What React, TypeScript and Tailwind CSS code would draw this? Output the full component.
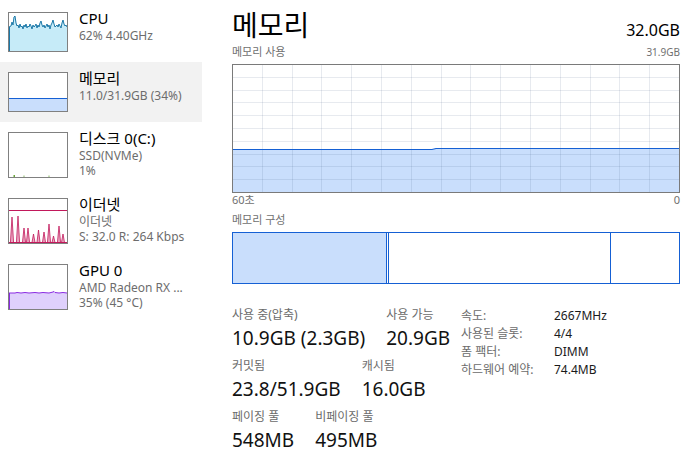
import React from 'react';

const BLUE = '#1560d4';

const CPU_PTS: [number, number][] = [
  [0, 14], [2, 13], [3, 9], [4, 12], [5, 4], [6, 3], [7, 10], [8, 13], [9, 12], [10, 15], [11, 11], [12, 14],
  [13, 13], [14, 16], [15, 12], [16, 14], [17, 11], [18, 15], [19, 13], [20, 14], [21, 11], [22, 13], [23, 16],
  [24, 12], [25, 14], [26, 13], [27, 11], [28, 15], [29, 12], [30, 14], [31, 10], [32, 8], [33, 12], [34, 14],
  [35, 12], [36, 15], [37, 13], [38, 11], [39, 14], [40, 12], [41, 16], [42, 12], [43, 10], [44, 7], [45, 11],
  [46, 14], [47, 13], [48, 12], [49, 14], [50, 11], [51, 13], [52, 15], [53, 10], [54, 7], [55, 11], [56, 13],
  [57, 12], [58, 14],
];

const ETH_SPIKES: [number, number][] = [
  [3, 18], [9, 17], [15, 29], [19, 29], [24.5, 35], [29.5, 31], [35, 33], [40, 25], [44.5, 37], [50, 27], [54, 35],
];

const GPU_PTS: [number, number][] = [
  [0, 28], [6, 28], [8, 27.5], [12, 28], [16, 27.5], [20, 28], [26, 27.5], [30, 28], [34, 27.5], [40, 28],
  [44, 27], [45, 26.5], [46, 27.5], [50, 28], [54, 27.5], [58, 28],
];

const toPts = (p: [number, number][]) => p.map(([x, y]) => `${x},${y}`).join(' ');

function CpuThumb() {
  const line = toPts(CPU_PTS);
  return (
    <svg width="58" height="38" className="block">
      <polygon points={`0,38 ${line} 58,38`} fill="#c6ebf8" />
      <polyline points={line} fill="none" stroke="#1b78a8" strokeWidth="1" />
      <line x1="0.5" y1="14" x2="0.5" y2="38" stroke="#1b78a8" />
    </svg>
  );
}

function MemThumb() {
  return (
    <svg width="58" height="38" className="block">
      <rect x="0" y="25" width="58" height="13" fill="#c9defc" />
      <line x1="0" y1="25.5" x2="58" y2="25.5" stroke={BLUE} />
    </svg>
  );
}

function DiskThumb() {
  return (
    <svg width="58" height="44" className="block">
      <rect x="4.5" y="42" width="1.5" height="2" fill="#6aa63a" />
      <rect x="14.5" y="42.5" width="1" height="1.5" fill="#8bbb66" />
      <rect x="39.5" y="42.5" width="1" height="1.5" fill="#8bbb66" />
    </svg>
  );
}

function EthThumb() {
  return (
    <svg width="58" height="44" className="block">
      <line x1="0" y1="11.5" x2="58" y2="11.5" stroke="#c2185b" />
      {ETH_SPIKES.map(([x, y], i) => (
        <polygon key={i} points={`${x - 1.6},44 ${x},${y} ${x + 1.6},44`} fill="#eaa9c3" stroke="#c2185b" strokeWidth="0.8" />
      ))}
      <line x1="0" y1="43.5" x2="58" y2="43.5" stroke="#c2185b" />
    </svg>
  );
}

function GpuThumb() {
  const line = toPts(GPU_PTS);
  return (
    <svg width="58" height="44" className="block">
      <polygon points={`0,44 ${line} 58,44`} fill="#dfd0fc" />
      <polyline points={line} fill="none" stroke="#8a2be2" strokeWidth="1" />
      <line x1="0.5" y1="28" x2="0.5" y2="44" stroke="#8a2be2" />
    </svg>
  );
}

const ITEMS = [
  { title: 'CPU', lines: ['62% 4.40GHz'], thumb: <CpuThumb />, tall: false },
  { title: '메모리', lines: ['11.0/31.9GB (34%)'], thumb: <MemThumb />, tall: false, selected: true },
  { title: '디스크 0(C:)', lines: ['SSD(NVMe)', '1%'], thumb: <DiskThumb />, tall: true },
  { title: '이더넷', lines: ['이더넷', 'S: 32.0 R: 264 Kbps'], thumb: <EthThumb />, tall: true },
  { title: 'GPU 0', lines: ['AMD Radeon RX ...', '35% (45 °C)'], thumb: <GpuThumb />, tall: true },
];

function SideItem({ item }: { item: (typeof ITEMS)[number] }) {
  return (
    <div className={`flex items-start py-[10px] pl-[8px] ${item.selected ? 'bg-[#f2f2f2]' : ''}`}>
      <div className={`w-[60px] ${item.tall ? 'h-[46px]' : 'h-[40px]'} border border-[#808080] bg-white overflow-hidden shrink-0`}>
        {item.thumb}
      </div>
      <div className="ml-[11px] -mt-[4px] whitespace-nowrap">
        <div className="text-[15px] leading-[20px] text-black">{item.title}</div>
        {item.lines.map((l, i) => (
          <div key={i} className="text-[12px] leading-[15px] text-[#6d6d6d]">{l}</div>
        ))}
      </div>
    </div>
  );
}

function UsageGraph() {
  const W = 448, H = 129;
  const cols = Array.from({ length: 14 }, (_, i) => Math.round((i + 1) * (W - 1) / 15) + 0.5);
  const rows = Array.from({ length: 9 }, (_, i) => Math.round((i + 1) * (H - 1) / 10) + 0.5);
  return (
    <svg width={W} height={H} className="block">
      <rect x="0" y="0" width={W} height={H} fill="#fff" />
      <polygon points={`1,85.5 200,85.5 204,84.5 ${W - 1},84.5 ${W - 1},${H - 1} 1,${H - 1}`} fill="#c9defc" />
      {cols.map((x, i) => (
        <line key={'c' + i} x1={x} y1="1" x2={x} y2={H - 1} stroke="rgba(60,80,120,0.12)" />
      ))}
      {rows.map((y, i) => (
        <line key={'r' + i} x1="1" y1={y} x2={W - 1} y2={y} stroke="rgba(60,80,120,0.12)" />
      ))}
      <polyline points={`1,85.5 200,85.5 204,84.5 ${W - 1},84.5`} fill="none" stroke={BLUE} strokeWidth="1.2" />
      <rect x="0.5" y="0.5" width={W - 1} height={H - 1} fill="none" stroke="#7a7a7a" />
    </svg>
  );
}

const STATS = [
  [['사용 중(압축)', '10.9GB (2.3GB)'], ['사용 가능', '20.9GB']],
  [['커밋됨', '23.8/51.9GB'], ['캐시됨', '16.0GB']],
  [['페이징 풀', '548MB'], ['비페이징 풀', '495MB']],
];

const SPECS = [
  ['속도:', '2667MHz'],
  ['사용된 슬롯:', '4/4'],
  ['폼 팩터:', 'DIMM'],
  ['하드웨어 예약:', '74.4MB'],
];

export default function App() {
  return (
    <div className="flex w-[687px] h-[458px] bg-white overflow-hidden font-['Noto_Sans','Noto_Sans_CJK_KR',sans-serif]">
      <aside className="w-[202px] pt-[2px] shrink-0">
        {ITEMS.map(it => <SideItem key={it.title} item={it} />)}
      </aside>

      <main className="flex-1 pl-[30px] pr-[7px] pt-[9px]">
        <div className="flex items-baseline justify-between">
          <div className="text-[28px] leading-[32px] text-black">메모리</div>
          <div className="text-[16px] leading-[20px] text-black">32.0GB</div>
        </div>
        <div className="mt-[4px] flex items-baseline justify-between leading-[14px] text-[#707070]">
          <span className="text-[11px]">메모리 사용</span>
          <span className="text-[10px]">31.9GB</span>
        </div>
        <div className="mt-[5px]">
          <UsageGraph />
        </div>
        <div className="flex justify-between text-[11px] leading-[14px] text-[#707070]">
          <span>60초</span>
          <span>0</span>
        </div>
        <div className="mt-[6px] text-[11px] leading-[14px] text-[#707070]">메모리 구성</div>
        <div className="mt-[5px] flex h-[52px] border border-[#1560d4]">
          <div className="w-[154px] bg-[#c9defc] border-r border-[#1560d4]" />
          <div className="w-[2px] border-r border-[#1560d4]" />
          <div className="flex-1 border-r border-[#1560d4]" />
          <div className="w-[68px]" />
        </div>

        <div className="mt-[23px] flex items-start">
          <div className="w-[229px] shrink-0">
            {STATS.map((row, ri) => (
              <div key={ri} className={`flex gap-[21px] ${ri > 0 ? 'mt-[8px]' : ''}`}>
                {row.map(([label, value]) => (
                  <div key={label} className="whitespace-nowrap">
                    <div className="text-[12px] leading-[16px] text-[#6b6b6b]">{label}</div>
                    <div className="mt-[3px] text-[19px] leading-[24px] text-[#111]">{value}</div>
                  </div>
                ))}
              </div>
            ))}
          </div>
          <div className="grid grid-cols-[93px_auto] content-start text-[12px] leading-[18px] whitespace-nowrap">
            {SPECS.map(([k, v]) => (
              <React.Fragment key={k}>
                <div className="text-[#6b6b6b]">{k}</div>
                <div className="text-[#1a1a1a]">{v}</div>
              </React.Fragment>
            ))}
          </div>
        </div>
      </main>
    </div>
  );
}
